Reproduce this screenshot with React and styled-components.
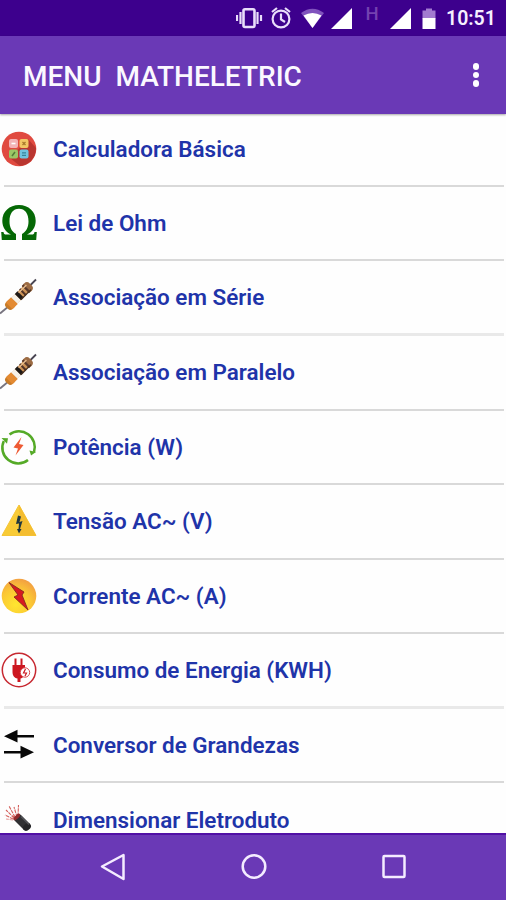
import React from 'react';
import styled, { createGlobalStyle } from 'styled-components';

const GlobalStyle = createGlobalStyle`
    * {
        box-sizing: border-box;
    }

    body {
        margin: 0;
        background: #fff;
        font-family: Roboto, "Liberation Sans", sans-serif;
    }
`;

const Screen = styled.div`
    display: flex;
    flex-direction: column;
    width: 506px;
    height: 900px;
    overflow: hidden;
    background: #fefefe;
`;

const StatusBar = styled.div`
    display: flex;
    flex: none;
    align-items: center;
    justify-content: flex-end;
    height: 36px;
    padding-right: 11px;
    background: #3d008d;
`;

const StatusIcons = styled.svg`
    width: 204px;
    height: 36px;
    margin-right: 6px;
`;

const NetworkType = styled.text`
    font: 500 18.5px Roboto, sans-serif;
    fill: #7442b0;
`;

const Clock = styled.span`
    width: 49px;
    padding-top: 2px;
    color: #f6f0ff;
    font-size: 19.5px;
    font-weight: 600;
    line-height: 36px;
    white-space: nowrap;
`;

const AppBar = styled.header`
    z-index: 1;
    display: flex;
    flex: none;
    align-items: center;
    justify-content: space-between;
    height: 78px;
    padding: 3px 27px 0 23px;
    background: #6a39b6;
    box-shadow: 0 1px 2px rgba(0, 0, 0, 0.35);
`;

const Title = styled.h1`
    margin: 0;
    color: #fbf8ff;
    font-size: 28px;
    font-weight: 550;
    white-space: pre;
`;

const MoreButton = styled.button`
    display: flex;
    flex-direction: column;
    gap: 2px;
    margin-top: -3px;
    padding: 0;
    border: 0;
    background: none;
`;

const Dot = styled.span`
    width: 6.5px;
    height: 6.5px;
    border-radius: 50%;
    background: #fff;
`;

const ListArea = styled.main`
    flex: 1;
    min-height: 0;
    overflow: hidden;
`;

const MenuList = styled.ul`
    margin: -1.7px 0 0;
    padding: 0;
    list-style: none;
`;

const MenuItem = styled.li`
    display: flex;
    flex-direction: column;
    height: 74.55px;
`;

const ItemContent = styled.div`
    display: flex;
    flex: 1;
    align-items: center;
    padding-left: 1px;
`;

const ItemIcon = styled.svg`
    flex: none;
    width: 36px;
    height: 36px;
    margin-right: 16px;
    overflow: visible;
`;

const Label = styled.span`
    color: #1f34a9;
    font-size: 22.45px;
    font-weight: 600;
    line-height: 28px;
    white-space: nowrap;
`;

const Divider = styled.div`
    flex: none;
    height: ${props => (props.$soft ? 3 : 2)}px;
    margin: 0 2px 0 4px;
    background: ${props => (props.$soft ? '#e9e9e9' : '#d9d9d9')};
`;

const NavBar = styled.nav`
    display: flex;
    flex: none;
    align-items: center;
    justify-content: space-between;
    height: 67px;
    padding: 0 98px 1px 99px;
    border-top: 2px solid #5110a5;
    background: #6a39b6;
`;

const NavIcon = styled.svg`
    width: 28px;
    height: 28px;
    fill: none;
    stroke: #f4ecff;
    stroke-width: 2.5;
    stroke-linejoin: round;
`;

const CalculatorIcon = () => (
    <ItemIcon viewBox="0 0 36 36">
        <circle cx="18" cy="18" r="17.3" fill="#e04a40" />
        <path d="M27 8 35 17C35 27 28 34 19 35L9 27Z" fill="#b93630" />
        <rect x="8" y="8" width="9" height="9" rx="2" fill="#f3b3b6" />
        <rect x="18.5" y="8" width="9" height="9" rx="2" fill="#f2c765" />
        <rect x="8" y="18.5" width="9" height="9" rx="2" fill="#9bc765" />
        <rect x="18.5" y="18.5" width="9" height="9" rx="2" fill="#6fc3df" />
        <path d="M10.5 12.5h4" stroke="#fff" strokeWidth="1.6" />
        <path d="m21.5 11 3 3m0-3-3 3" stroke="#a9792c" strokeWidth="1.3" />
        <path d="m14 21-3 4" stroke="#537c38" strokeWidth="1.5" />
        <path d="M21 21.8h4m-4 2.6h4" stroke="#37839a" strokeWidth="1.3" />
    </ItemIcon>
);

const OhmIcon = () => (
    <ItemIcon viewBox="0 0 36 36">
        <path
            d="M.2 27h2.300c.3 2 1 2.500 2.700 2.500H10C4.500 27 1.300 22 1.300 15.700 1.300 6.500 8.500 0 18 0s16.700 6.500 16.700 15.700C34.700 22 31.500 27 26 29.500h4.800c1.700 0 2.400-.5 2.700-2.500h2.300l-.6 8H21v-6c4.300-2.500 6.500-7 6.500-12.500C27.500 8.500 24 3.800 18 3.800S8.500 8.500 8.500 16.500C8.500 22 10.700 26.500 15 29v6H.8Z"
            fill="#056805"
        />
    </ItemIcon>
);

const ResistorIcon = () => (
    <ItemIcon viewBox="0 0 36 36">
        <path d="M-1 34.500 8 27" stroke="#77747f" strokeWidth="1.800" />
        <path d="m29 6.500 6-6" stroke="#494653" strokeWidth="1.800" />
        <g transform="translate(18 17) rotate(-45)">
            <rect x="-17" y="-4.700" width="9" height="9.400" rx="3.500" fill="#c77b28" />
            <rect x="7.500" y="-5.300" width="9" height="10.600" rx="4" fill="#9c6b43" />
            <rect x="-12.500" y="-4" width="23" height="8" fill="#cc9256" />
            <rect x="-14" y="-4.700" width="7.500" height="9.400" fill="#e38a32" />
            <rect x="-6.500" y="-4.200" width="5" height="8.400" fill="#f6f0e6" />
            <rect x="-1.500" y="-4.400" width="3.800" height="8.800" fill="#1d1917" />
            <rect x="4.500" y="-4.400" width="2" height="8.800" fill="#513326" />
            <rect x="9" y="-5.100" width="2.300" height="10.200" fill="#5a3a2c" />
            <path d="M-1 4h14" stroke="#49301f" strokeWidth="1.300" />
            <path d="M2-2.500h11" stroke="#e8bd8d" strokeWidth="1.300" />
        </g>
    </ItemIcon>
);

const PowerIcon = () => (
    <ItemIcon viewBox="0 0 36 36">
        <g fill="none" stroke="#55aa27" strokeWidth="2.500">
            <path d="M8.500 5.500A15.800 15.800 0 0 1 33 23" />
            <path d="M27 31A15.800 15.800 0 0 1 2.800 12" />
        </g>
        <path d="m.5 9 6.500.3-1 5.500Z" fill="#55aa27" />
        <path d="m28.500 21.500 6.500 1.500-5 3.500Z" fill="#55aa27" />
        <path d="m20.500 8-8 10.500 4.500 1-2.500 7 8-10.500-4.500-1Z" fill="#ee5a33" />
    </ItemIcon>
);

const VoltageIcon = () => (
    <ItemIcon viewBox="0 0 36 36">
        <path d="M18 2 35 32.500H1Z" fill="#f8cb36" stroke="#f5c536" strokeLinejoin="round" />
        <path d="m18 2 17 30.500H19Z" fill="#f4bd30" />
        <path d="m17 12.500-2 8.500 3-.5-.5 5.500H16l2 4.500 2.500-4.500H19l2.500-8-3 1 1.500-5.500Z" fill="#20383f" />
    </ItemIcon>
);

const CurrentIcon = () => (
    <ItemIcon viewBox="0 0 36 36">
        <defs>
            <radialGradient id="currentGlow" cx="0.4" cy="0.75" r="0.75">
                <stop offset="0" stopColor="#ffe52f" />
                <stop offset="0.6" stopColor="#fbc735" />
                <stop offset="1" stopColor="#f3a141" />
            </radialGradient>
        </defs>
        <circle cx="18" cy="18" r="17.300" fill="url(#currentGlow)" />
        <path d="m8 4.500 15 9.500-2 3 6 15-14-13 4-2Z" fill="#d71920" stroke="#842a20" strokeWidth="0.900" />
    </ItemIcon>
);

const PlugIcon = () => (
    <ItemIcon viewBox="0 0 36 36">
        <circle cx="18" cy="18" r="16.700" fill="#fff" stroke="#c72931" strokeWidth="1.500" />
        <path d="M14.500 6.500v8m6-8v8" stroke="#cc1720" strokeWidth="2" />
        <path d="M11.500 13H24v7c0 4-2 6-4.500 6.500V30h-3v-3.500C13 26 11.500 23 11.500 20Z" fill="#cc1720" />
        <circle cx="24" cy="20.500" r="4.700" fill="#fff" stroke="#d94b50" />
        <path d="m24.500 17-2 4h3l-1.500 3" fill="none" stroke="#cc1720" strokeWidth="1.200" />
    </ItemIcon>
);

const ConvertIcon = () => (
    <ItemIcon viewBox="0 0 36 36">
        <path d="M12 9.200h21M3 25.200h21" stroke="#080808" strokeWidth="2.400" />
        <path d="m3 9.200 13.500-6.400V15.600ZM33 25.200l-13.500-6.400v12.800Z" fill="#080808" />
    </ItemIcon>
);

const ConduitIcon = () => (
    <ItemIcon viewBox="0 0 36 36">
        <g fill="none" stroke="#d5605c" strokeWidth="1.100" strokeDasharray="3.500 0.800">
            <path d="m13 16-8-8m9 7L8 4m8 11L13 5m4 9 .500-11M12 17l-8-4" />
            <path d="m12 18-7-1" stroke="#e6a09d" />
        </g>
        <path d="m11 13 5 2-3 3Z" fill="#d96b66" />
        <path d="m16.500 15.500 9.500 9.500" stroke="#303033" strokeWidth="8.500" />
        <ellipse cx="26" cy="25" rx="4.400" ry="3.300" transform="rotate(-45 26 25)" fill="#242427" />
        <ellipse cx="15.800" cy="15" rx="4.300" ry="1.800" transform="rotate(-45 15.800 15)" fill="#922a2c" />
        <path d="m20 14.500 8 8" stroke="#55555a" strokeWidth="1.200" />
    </ItemIcon>
);

const menuItems = [
    { label: 'Calculadora Básica', Icon: CalculatorIcon },
    { label: 'Lei de Ohm', Icon: OhmIcon },
    { label: 'Associação em Série', Icon: ResistorIcon, soft: true },
    { label: 'Associação em Paralelo', Icon: ResistorIcon },
    { label: 'Potência (W)', Icon: PowerIcon },
    { label: 'Tensão AC~ (V)', Icon: VoltageIcon },
    { label: 'Corrente AC~ (A)', Icon: CurrentIcon },
    { label: 'Consumo de Energia (KWH)', Icon: PlugIcon, soft: true },
    { label: 'Conversor de Grandezas', Icon: ConvertIcon },
    { label: 'Dimensionar Eletroduto', Icon: ConduitIcon },
];

const StatusSymbols = () => (
    <StatusIcons viewBox="236 0 204 36">
        <g fill="none" stroke="#e9ddfa" strokeWidth="2.200">
            <rect x="243.500" y="9.300" width="11" height="17.700" rx="1.500" strokeWidth="2.600" />
            <path d="M240.500 12v12m17-12v12M237 15v6m24-6v6" />
            <circle cx="281" cy="19" r="8.400" />
            <path d="M281 13.500v6l4 2.500M272 12l5-4m13 4-5-4" />
        </g>
        <path d="M301 13q11.500-8.500 23 0L312.500 28Z" fill="#8053bd" />
        <path d="M303.500 15.500q9-5 18 0l-9 12.500Z" fill="#fff" />
        <path d="M352 8v21h-21ZM411 8v21h-21Z" fill="#fff" />
        <NetworkType x="365.500" y="19.500">H</NetworkType>
        <path d="M426 8.500h6v2h3.500v8h-13v-8h3.500Z" fill="#a27bd0" />
        <path d="M422.500 18h13v11h-13Z" fill="#fff" />
    </StatusIcons>
);

const App = () => (
    <>
        <GlobalStyle />
        <Screen>
            <StatusBar>
                <StatusSymbols />
                <Clock>10:51</Clock>
            </StatusBar>
            <AppBar>
                <Title>MENU  MATHELETRIC</Title>
                <MoreButton aria-label="Mais opções">
                    <Dot />
                    <Dot />
                    <Dot />
                </MoreButton>
            </AppBar>
            <ListArea>
                <MenuList>
                    {menuItems.map(({ label, Icon, soft }) => (
                        <MenuItem key={label}>
                            <ItemContent>
                                <Icon />
                                <Label>{label}</Label>
                            </ItemContent>
                            <Divider $soft={soft} />
                        </MenuItem>
                    ))}
                </MenuList>
            </ListArea>
            <NavBar>
                <NavIcon viewBox="0 0 28 28"><path d="M3 13.500 24.500 2v24Z" /></NavIcon>
                <NavIcon viewBox="0 0 28 28"><circle cx="14" cy="13.500" r="11.300" /></NavIcon>
                <NavIcon viewBox="0 0 28 28"><rect x="3.500" y="3" width="21" height="21" rx="1" /></NavIcon>
            </NavBar>
        </Screen>
    </>
);

export default App;
